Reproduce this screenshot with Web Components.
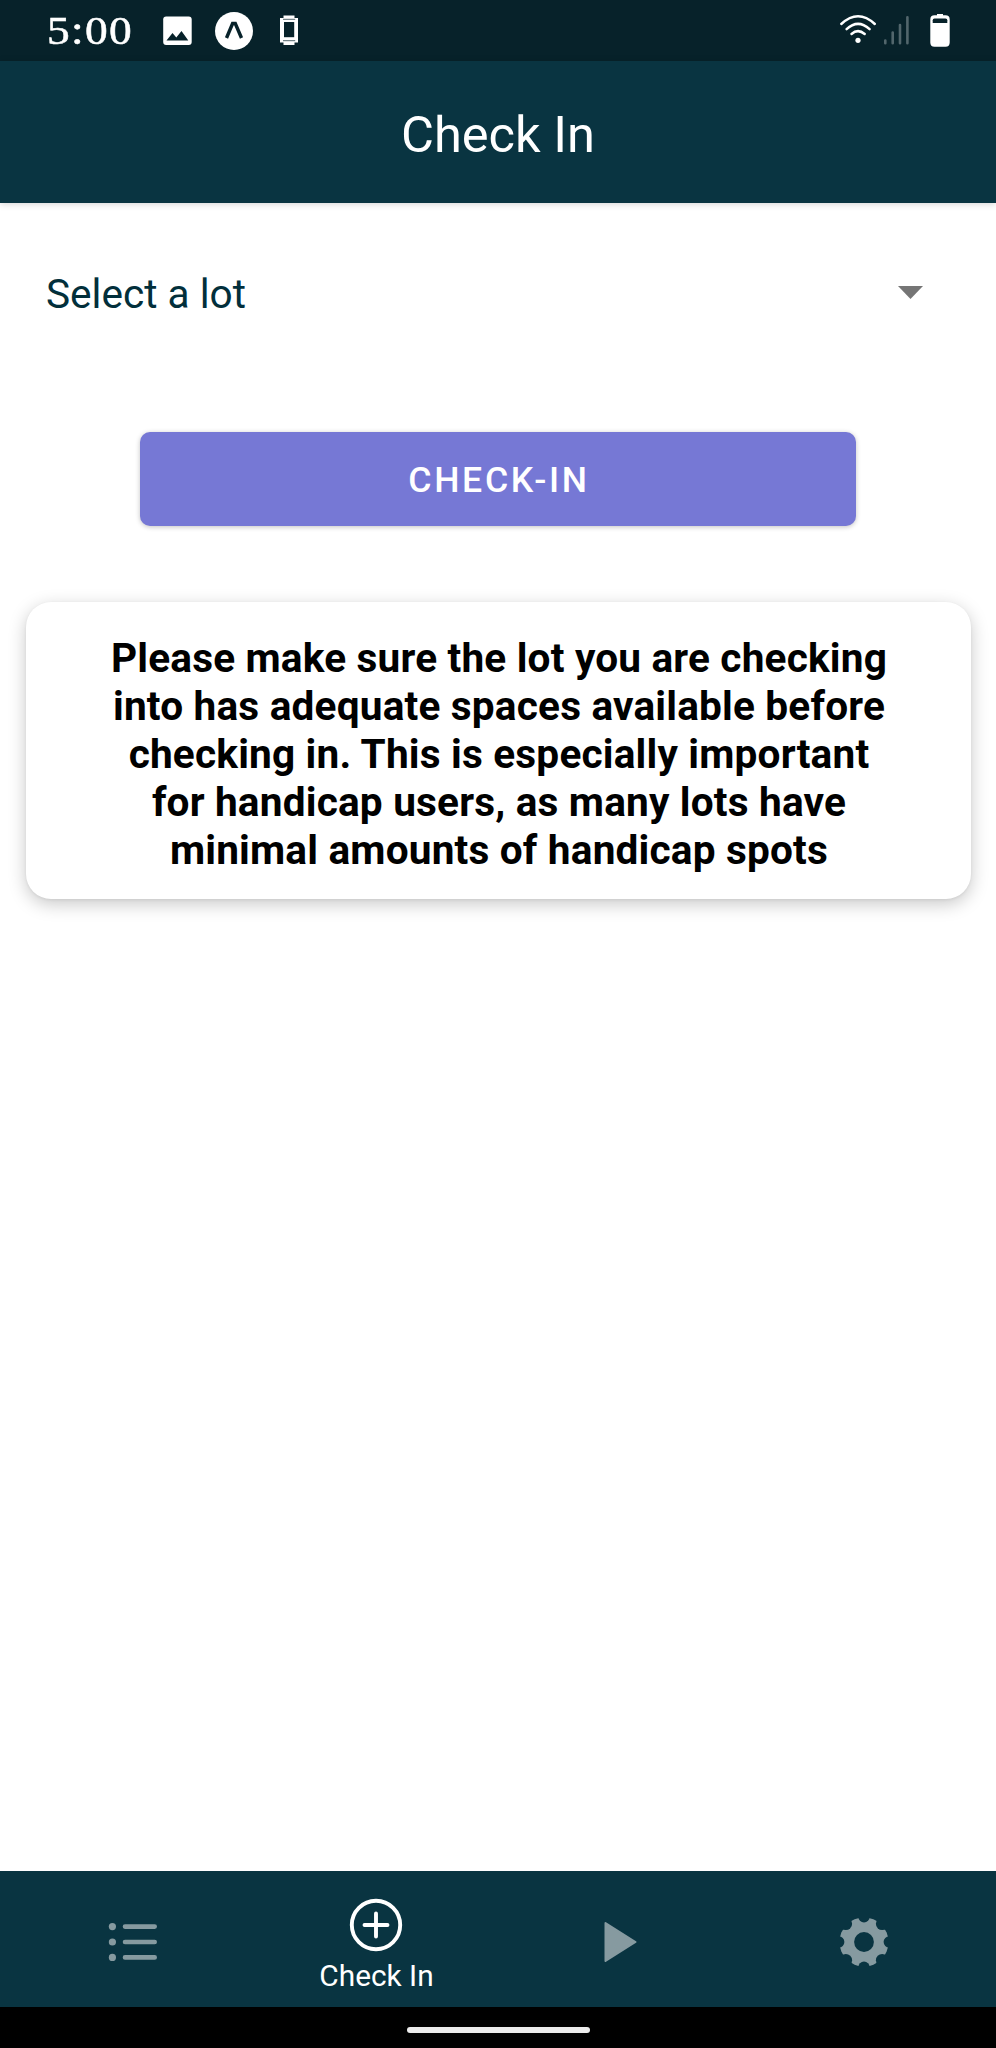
<!DOCTYPE html>
<html lang="en">
<head>
<meta charset="utf-8">
<title>Check In</title>
<style>
html,body{margin:0;padding:0;background:#fff}
body{font-family:Roboto,"Liberation Sans",sans-serif}
</style>
</head>
<body>
<parking-app></parking-app>
<script>
const define = (name, html) => {
  const t = document.createElement('template');
  t.innerHTML = html;
  customElements.define(name, class extends HTMLElement {
    constructor() {
      super();
      this.attachShadow({mode: 'open'}).appendChild(t.content.cloneNode(true));
    }
  });
};

define('status-bar', `
<style>
:host{display:flex;box-sizing:border-box;height:61px;background:#07222a;color:#fff;padding:0 46px 0 47px;justify-content:space-between}
.time{font:39px/61px "Liberation Serif",serif;width:84px;letter-spacing:1.100px;-webkit-text-stroke:.5px #fff;transform:scaleX(1.165);transform-origin:0 50%}
.left,.right{display:flex}
svg{display:block}
.left svg{margin-left:32px}
</style>
<div class="left"><span class="time">5:00</span>
<svg width="136" height="61" viewBox="163 0 136 61">
  <rect x="163.200" y="16.500" width="28.500" height="28.500" rx="3" fill="#fff"/>
  <path d="M166.500 40.500L172.500 33L176.300 37.500L181.500 31L188.300 40.500Z" fill="#07222a"/>
  <circle cx="234" cy="31" r="19" fill="#fff"/>
  <path d="M226.500 38L232.600 23.500H235.300L241.500 38" fill="none" stroke="#07222a" stroke-width="3.400"/>
  <path d="M280 18H283.500V15.500H294.500V18H298V42.500H294.500V45H283.500V42.500H280Z" fill="#fff"/>
  <rect x="284" y="22" width="10.200" height="15.200" fill="#07222a"/>
  <path d="M283 19.300H295.200M283 40.700H295.200" stroke="#52666c" stroke-width="1"/>
</svg></div>
<div class="right">
<svg width="111" height="61" viewBox="839 0 111 61">
  <g fill="none" stroke="#fff" stroke-width="2.500" stroke-linecap="round">
    <path d="M841.300 24Q858 8.500 874.800 24"/>
    <path d="M846.600 29.200Q858 18.500 869.600 29.200"/>
    <path d="M851.500 34Q858 28.300 864.700 34"/>
  </g>
  <circle cx="858" cy="40.300" r="2.600" fill="#fff"/>
  <path d="M885.300 40.500V43.200M892.700 32.500V43.200M900 25V43.200M907.400 17.200V43.200" stroke="#52666c" stroke-width="2.600" stroke-linecap="round"/>
  <path d="M934.500 15.300H937V14H943V15.300H945.500Q949.700 15.300 949.700 19.500V42.500Q949.700 46.700 945.500 46.700H934.500Q930.300 46.700 930.300 42.500V19.500Q930.300 15.300 934.500 15.300Z" fill="#fff"/>
  <path d="M934.500 18.400H945.500Q947.300 18.400 947.300 20.300V23H932.700V20.300Q932.700 18.400 934.500 18.400Z" fill="#07222a"/>
</svg></div>`);

define('app-header', `
<style>
:host{display:flex;height:142px;background:#093441;color:#fff;align-items:center;justify-content:center;font-size:50.600px;box-shadow:0 1px 7px rgba(0,0,0,.18)}
span{line-height:60px;padding-top:6px}
</style><span><slot></slot></span>`);

define('lot-select', `
<style>
:host{display:flex;align-items:center;justify-content:space-between;padding:0 73px 0 46px;height:60px;margin-top:61px;color:#022f3b;font-size:40.600px}
svg{display:block;margin-top:-3px}
</style><span><slot></slot></span>
<svg width="25" height="13" viewBox="0 0 25 13"><path d="M0 0H25L12.500 13Z" fill="#757575"/></svg>`);

define('primary-button', `
<style>
:host{display:block;margin:108px 140px 0}
button{display:block;width:100%;height:94px;border:0;border-radius:10px;background:#7678d5;color:#fff;font:500 35.600px/94px Roboto,sans-serif;letter-spacing:2.700px;padding:2px 0 0;text-align:center;box-shadow:0 1px 5px rgba(0,0,0,.24)}
span{display:block;margin-top:-1px;padding-left:2px}
</style><button><span><slot></slot></span></button>`);

define('notice-card', `
<style>
:host{display:block;box-sizing:border-box;margin:76px 25px 0 26px;height:297px;padding:31.500px 0 0 1px;border-radius:25px;background:#fff;color:#000;text-align:center;font-weight:700;font-size:40.600px;line-height:48.100px;letter-spacing:.180px;box-shadow:0 5px 18px rgba(0,0,0,.22),0 1px 3px rgba(0,0,0,.06)}
</style><slot></slot>`);

define('tab-item', `
<style>
:host{flex:1;display:flex;flex-direction:column;align-items:center;justify-content:center;color:#869aa0;font-size:29.800px;line-height:36px}
:host([active]){color:#fff;padding-top:8px}
</style><slot name="icon"></slot><slot></slot>`);

define('tab-bar', `
<style>
:host{display:flex;box-sizing:border-box;height:136px;padding:6px 10px 0 10px;background:#093441}
svg{display:block}
</style>
<tab-item><svg slot="icon" width="50" height="50" viewBox="-25 -25 50 50" fill="currentColor">
  <circle cx="-19.600" cy="-15.400" r="3.600"/><circle cx="-19.600" r="3.600"/><circle cx="-19.600" cy="15.400" r="3.600"/>
  <path d="M-7 -15.400H22.700M-7 0H22.700M-7 15.400H22.700" stroke="currentColor" stroke-width="4.600" stroke-linecap="round"/></svg></tab-item>
<tab-item active><svg slot="icon" width="54" height="54" viewBox="-27 -27 54 54" fill="none" stroke="currentColor" stroke-width="3.900" stroke-linecap="round">
  <circle r="24.200"/><path d="M-11.500 0H11.500M0 -11.500V11.500"/></svg><span class="label"><label-text>Check In</label-text></span></tab-item>
<tab-item><svg slot="icon" width="50" height="50" viewBox="-25 -25 50 50"><path d="M-14.500 -19L15.500 0L-14.500 19Z" fill="currentColor" stroke="currentColor" stroke-width="2" stroke-linejoin="round"/></svg></tab-item>
<tab-item><svg slot="icon" width="50" height="50" viewBox="-25 -25 50 50">
  <mask id="teeth"><circle r="24.500" fill="#fff"/><g fill="#000"><circle r="9.900"/>
  <circle cy="-25.300" r="5.700"/><circle cy="25.300" r="5.700"/><circle cx="25.300" r="5.700"/><circle cx="-25.300" r="5.700"/>
  <circle cx="18.200" cy="-18.200" r="6.300"/><circle cx="18.200" cy="18.200" r="6.300"/><circle cx="-18.200" cy="18.200" r="6.300"/><circle cx="-18.200" cy="-18.200" r="6.300"/></g></mask>
  <rect x="-25" y="-25" width="50" height="50" fill="currentColor" mask="url(#teeth)"/></svg></tab-item>`);

define('label-text', `<style>:host{display:block;margin:6px 0 0 1px}</style><slot></slot>`);

define('gesture-bar', `
<style>
:host{display:flex;height:41px;background:#000;justify-content:center;align-items:center}
i{display:block;width:183px;height:6px;border-radius:3px;background:#ececec;margin-top:4px}
</style><i></i>`);

define('parking-app', `
<style>
:host{display:flex;flex-direction:column;width:996px;height:2048px;background:#fff;overflow:hidden}
main{flex:1}
main::before{content:"";display:table}
</style>
<status-bar></status-bar>
<app-header>Check In</app-header>
<main>
  <lot-select>Select a lot</lot-select>
  <primary-button>CHECK-IN</primary-button>
  <notice-card>Please make sure the lot you are checking<br>into has adequate spaces available before<br>checking in. This is especially important<br>for handicap users, as many lots have<br>minimal amounts of handicap spots</notice-card>
</main>
<tab-bar></tab-bar>
<gesture-bar></gesture-bar>`);
</script>
</body>
</html>
